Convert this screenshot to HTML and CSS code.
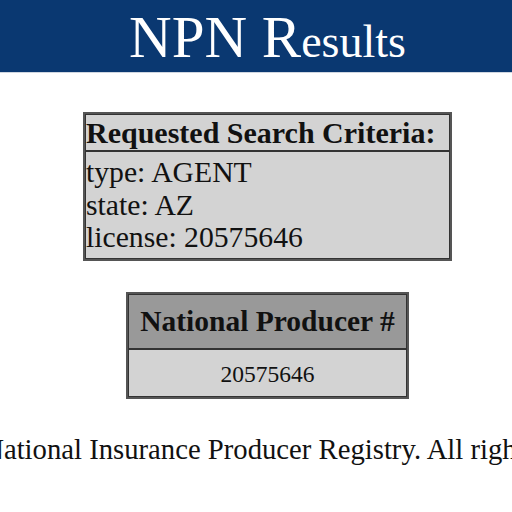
FILE: index.html
```html
<!DOCTYPE html>
<html>
<head>
<meta charset="utf-8">
<title>NPN Results</title>
<link rel="stylesheet" href="styles.css">
</head>
<body>
<div class="page">
  <header class="banner">
    <h1 class="title">NPN <span class="cap">R</span><span class="small">esults</span></h1>
  </header>
  <main class="content">
    <table class="criteria">
      <tr><th class="crit-head">Requested Search Criteria:</th></tr>
      <tr><td class="crit-body">type: AGENT<br>state: AZ<br>license: 20575646</td></tr>
    </table>
    <table class="results">
      <tr><th class="res-head">National Producer #</th></tr>
      <tr><td class="res-cell">20575646</td></tr>
    </table>
  </main>
  <footer class="footer"><span class="footer-text">© 2024 National Insurance Producer Registry. All rights reserved.</span></footer>
</div>
</body>
</html>
```
FILE: styles.css
```css
html, body {
  margin: 0;
  padding: 0;
  background: #ffffff;
  overflow: hidden;
}
.page {
  width: 535px;
  font-family: "Liberation Serif", "Times New Roman", serif;
  color: #111;
}
.banner {
  background: #0a3871;
  height: 72px;
  border-bottom: 1px solid #cfd6e0;
  text-align: center;
}
.title {
  margin: 0;
  padding-top: 3px;
  font-weight: normal;
  font-size: 59px;
  line-height: 68px;
  color: #ffffff;
  white-space: nowrap;
}
.small {
  font-size: 46px;
  line-height: 1;
}
.content {
  display: flex;
  flex-direction: column;
  align-items: center;
  padding-top: 39px;
  gap: 31px;
}
table {
  border-collapse: separate;
  border-spacing: 0;
  border: 2px solid #555555;
  background: #d3d3d3;
}
th, td {
  border: 1px solid #333333;
}
.criteria {
  width: 369px;
}
.crit-head {
  text-align: left;
  font-size: 30px;
  font-weight: bold;
  line-height: 33px;
  padding: 1px 0;
}
.crit-body {
  text-align: left;
  font-size: 29.7px;
  line-height: 32.5px;
  padding: 4px 0 4.5px 0;
}
.results {
  width: 283px;
}
.res-head {
  background: #999999;
  font-size: 29.5px;
  font-weight: bold;
  line-height: 33px;
  padding: 9.5px 8px 10px;
}
.res-cell {
  text-align: center;
  font-size: 23.5px;
  line-height: 26px;
  padding: 11px 8px 9px;
}
.footer {
  margin-top: 34px;
  padding-left: 2px;
  display: flex;
  justify-content: center;
  font-size: 28.7px;
  white-space: nowrap;
}
.footer-text {
  flex: none;
}
```
